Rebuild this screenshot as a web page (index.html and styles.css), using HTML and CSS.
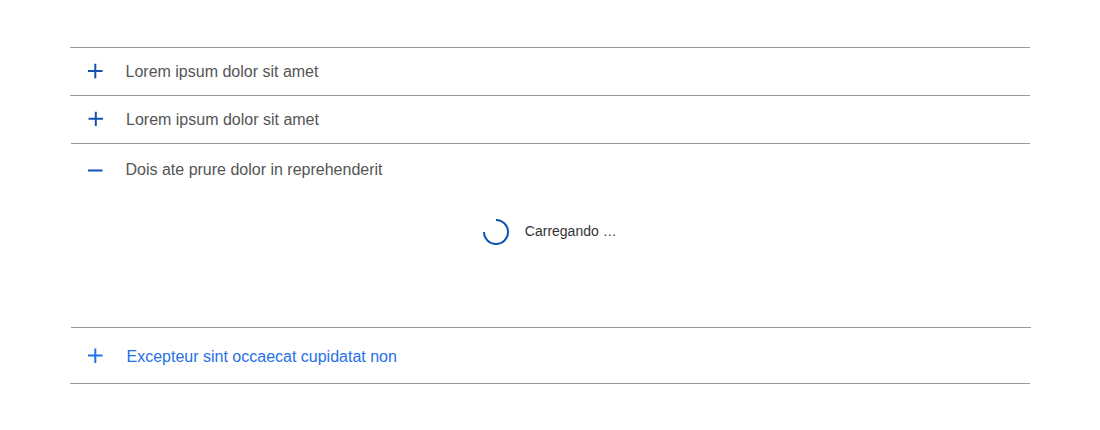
FILE: index.html
```html
<!DOCTYPE html>
<html lang="pt-BR">
<head>
<meta charset="utf-8">
<title>Accordion</title>
<link rel="stylesheet" href="styles.css">
</head>
<body>
<main class="accordion">
  <section class="item">
    <svg class="icon" viewBox="0 0 16 16"><path d="M1 7H15.6M8.3 -.2V14.2"/></svg>
    <span class="label">Lorem ipsum dolor sit amet</span>
  </section>
  <section class="item second">
    <svg class="icon" viewBox="0 0 16 16"><path d="M1.5 6.7H16M8.8 -.3V14"/></svg>
    <span class="label">Lorem ipsum dolor sit amet</span>
  </section>
  <section class="panel">
    <div class="panel-head">
      <svg class="icon" viewBox="0 0 16 16"><path d="M1 8.5H15.5"/></svg>
      <span class="label">Dois ate prure dolor in reprehenderit</span>
    </div>
    <div class="loading">
      <svg class="spinner" viewBox="0 0 28 28"><path d="M14 2A12 12 0 1 1 2 14"/></svg>
      <span class="loading-text">Carregando …</span>
    </div>
  </section>
  <section class="item active">
    <svg class="icon" viewBox="0 0 16 16"><path d="M1 7.5H15.6M8.3 .6V14.9"/></svg>
    <span class="label">Excepteur sint occaecat cupidatat non</span>
  </section>
</main>
</body>
</html>
```

FILE: styles.css
```css
body {
  margin: 0;
  background: #fff;
  font-family: "Liberation Sans", Arial, sans-serif;
}
.accordion {
  width: 960px;
  margin: 47px 0 0 70px;
}
.item {
  display: flex;
  align-items: center;
  height: 47px;
  border-top: 1px solid #999;
  color: #555;
  font-size: 16px;
}
.icon {
  width: 16px;
  height: 16px;
  margin: 0 22.5px 0 17px;
  overflow: visible;
  fill: none;
  stroke: #1351b4;
  stroke-width: 2;
}
.second .icon {
  margin-right: 23px;
}
.panel {
  height: 183px;
  margin-left: 1px;
  border-top: 1px solid #999;
  color: #555;
}
.panel-head {
  display: flex;
  align-items: center;
  height: 52px;
  margin-left: -1px;
}
.loading {
  display: flex;
  align-items: center;
  justify-content: center;
  gap: 15px;
  height: 71px;
  margin: 0 2.5px 0 0;
  color: #333;
  font-size: 14px;
}
.loading-text {
  padding-bottom: 2px;
}
.spinner {
  width: 28px;
  height: 28px;
  fill: none;
  stroke: #1351b4;
  stroke-width: 2;
}
.active {
  position: relative;
  height: 55px;
  border-bottom: 1px solid #999;
  border-top: 0;
  padding-top: 1px;
  color: #2670e8;
}
.active::before {
  content: "";
  position: absolute;
  top: 0;
  left: 1px;
  width: 960px;
  height: 1px;
  background: #999;
}
.active .label {
  padding-top: 2px;
}
.active .icon {
  margin-right: 23.5px;
  stroke: #2670e8;
}
```
